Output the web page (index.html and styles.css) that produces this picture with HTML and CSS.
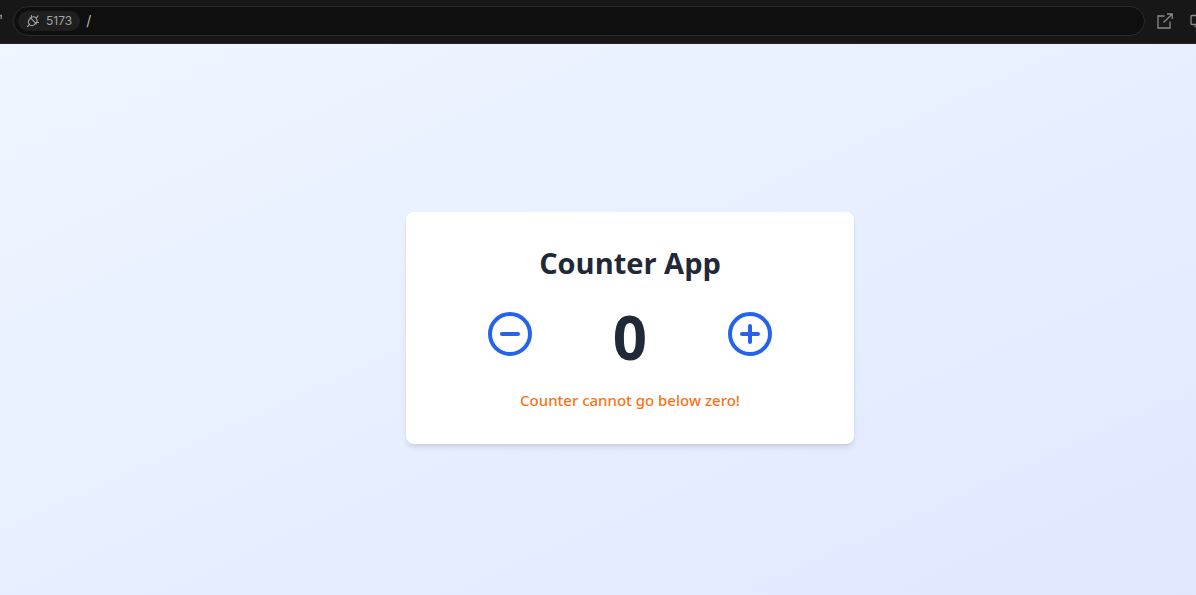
FILE: index.html
```html
<!DOCTYPE html>
<html lang="en">
<head>
  <meta charset="utf-8">
  <meta name="viewport" content="width=device-width, initial-scale=1">
  <title>Counter App</title>
  <link rel="stylesheet" href="styles.css">
</head>
<body>
  <header class="toolbar">
    <button class="tool tool-reload" type="button" aria-label="Reload">
      <svg width="3" height="16" viewBox="0 0 3 16" fill="none" stroke="currentColor" stroke-width="1.4"><path d="M0 2.500h1.300V6"/></svg>
    </button>
    <div class="address">
      <button class="port" type="button">
        <svg width="14" height="14" viewBox="0 0 14 14" fill="none" stroke="currentColor" stroke-width="1.1" stroke-linecap="round" stroke-linejoin="round">
          <path d="M1.500 12.500l2-2M4.800 4.200L3.500 5.500a3.400 3.400 0 0 0 0 5 3.400 3.400 0 0 0 5 0l1.300-1.300M4.200 3.600l6.200 6.200M4.800 4.200C6.500 2.300 8.300 2.400 9.900 4.100s1.700 3.400-.1 5.100M9.900 4.100l2.200-2.200M5.500 3V1.500M11 8.500h1.500"/>
        </svg>
        <span>5173</span>
      </button>
      <input class="path" type="text" value="/" aria-label="Path">
    </div>
    <button class="tool" type="button" aria-label="Open in new tab">
      <svg width="16" height="16" viewBox="0 0 16 16" fill="none" stroke="currentColor" stroke-width="1.3"><path d="M7.500 3H1v12h12V8.500M6.500 9.500L15 1.200M10 1h5.200v5"/></svg>
    </button>
    <button class="tool tool-device" type="button" aria-label="Device preview">
      <svg width="6" height="16" viewBox="0 0 6 16" fill="none" stroke="currentColor" stroke-width="1.3"><path d="M6 11.500H2.200Q1 11.500 1 10.300V3.700Q1 2.500 2.200 2.500H6M4.500 13.500H6"/></svg>
    </button>
  </header>
  <main class="preview">
    <section class="card">
      <h1 class="title">Counter App</h1>
      <div class="counter">
        <button class="step" type="button" aria-label="Decrease">
          <svg width="48" height="48" viewBox="0 0 24 24" fill="none" stroke="currentColor" stroke-width="2" stroke-linecap="round"><circle cx="12" cy="12" r="10"/><path d="M8 12h8"/></svg>
        </button>
        <output class="count">0</output>
        <button class="step" type="button" aria-label="Increase">
          <svg width="48" height="48" viewBox="0 0 24 24" fill="none" stroke="currentColor" stroke-width="2" stroke-linecap="round"><circle cx="12" cy="12" r="10"/><path d="M8 12h8M12 8v8"/></svg>
        </button>
      </div>
      <p class="message" role="alert">Counter cannot go below zero!</p>
    </section>
  </main>
</body>
</html>
```
FILE: styles.css
```css
* {
  box-sizing: border-box;
}

body {
  margin: 0;
  min-height: 100vh;
  display: flex;
  flex-direction: column;
  font-family: "Open Sans", "Noto Sans", sans-serif;
}

button {
  border: 0;
  padding: 0;
  background: none;
  font: inherit;
  cursor: pointer;
}

svg {
  display: block;
  flex: none;
}

.toolbar {
  flex: none;
  display: flex;
  align-items: center;
  height: 44px;
  padding-bottom: 2px;
  background: #171717;
  border-bottom: 1px solid #2a2322;
  font-family: Inter, sans-serif;
}

.tool {
  flex: none;
  color: #8a8a8a;
  margin-left: 12px;
}

.tool-reload {
  margin-left: 0;
}

.tool-device {
  margin-left: 17px;
}

.address {
  flex: 1;
  display: flex;
  align-items: center;
  gap: 6px;
  height: 30px;
  margin-left: 10px;
  padding: 0 4px;
  background: #0f0f0f;
  border: 1px solid #2b2b2b;
  border-radius: 15px;
}

.port {
  display: flex;
  align-items: center;
  gap: 6px;
  height: 20px;
  padding: 0 8px;
  border-radius: 10px;
  background: #1f1f1f;
  color: #a3a3a3;
  font-size: 12px;
}

.path {
  flex: 1;
  min-width: 0;
  border: 0;
  padding: 0;
  outline: 0;
  background: none;
  color: #b5b5b5;
  font: 14px/20px Inter, sans-serif;
}

/* The gradient belongs to a viewport larger than the visible pane. */
.preview {
  flex: 1;
  display: flex;
  align-items: center;
  justify-content: center;
  padding: 17px 0 0 64px;
  background: linear-gradient(to bottom right, #eff6ff, #e0e7ff) 0 0 / calc(100% + 64px) calc(100% + 17px) no-repeat;
}

.card {
  width: 100%;
  max-width: 448px;
  padding: 32px;
  background: #fff;
  border-radius: 8px;
  box-shadow: 0 4px 6px -1px rgb(0 0 0 / 0.1), 0 2px 4px -2px rgb(0 0 0 / 0.1);
  text-align: center;
}

.title {
  margin: 0 0 24px;
  padding-top: 2px;
  font-size: 29px;
  line-height: 34px;
  font-weight: 700;
  color: #1f2937;
}

.counter {
  display: flex;
  align-items: center;
  justify-content: center;
  gap: 32px;
}

.step {
  color: #2563eb;
}

.count {
  width: 128px;
  padding-top: 6px;
  font-size: 60px;
  line-height: 54px;
  font-weight: 700;
  color: #1f2937;
}

.message {
  margin: 24px 0 0;
  font-family: "Noto Sans", "Open Sans", sans-serif;
  font-size: 15px;
  line-height: 24px;
  font-weight: 500;
  color: #f97316;
}
```
